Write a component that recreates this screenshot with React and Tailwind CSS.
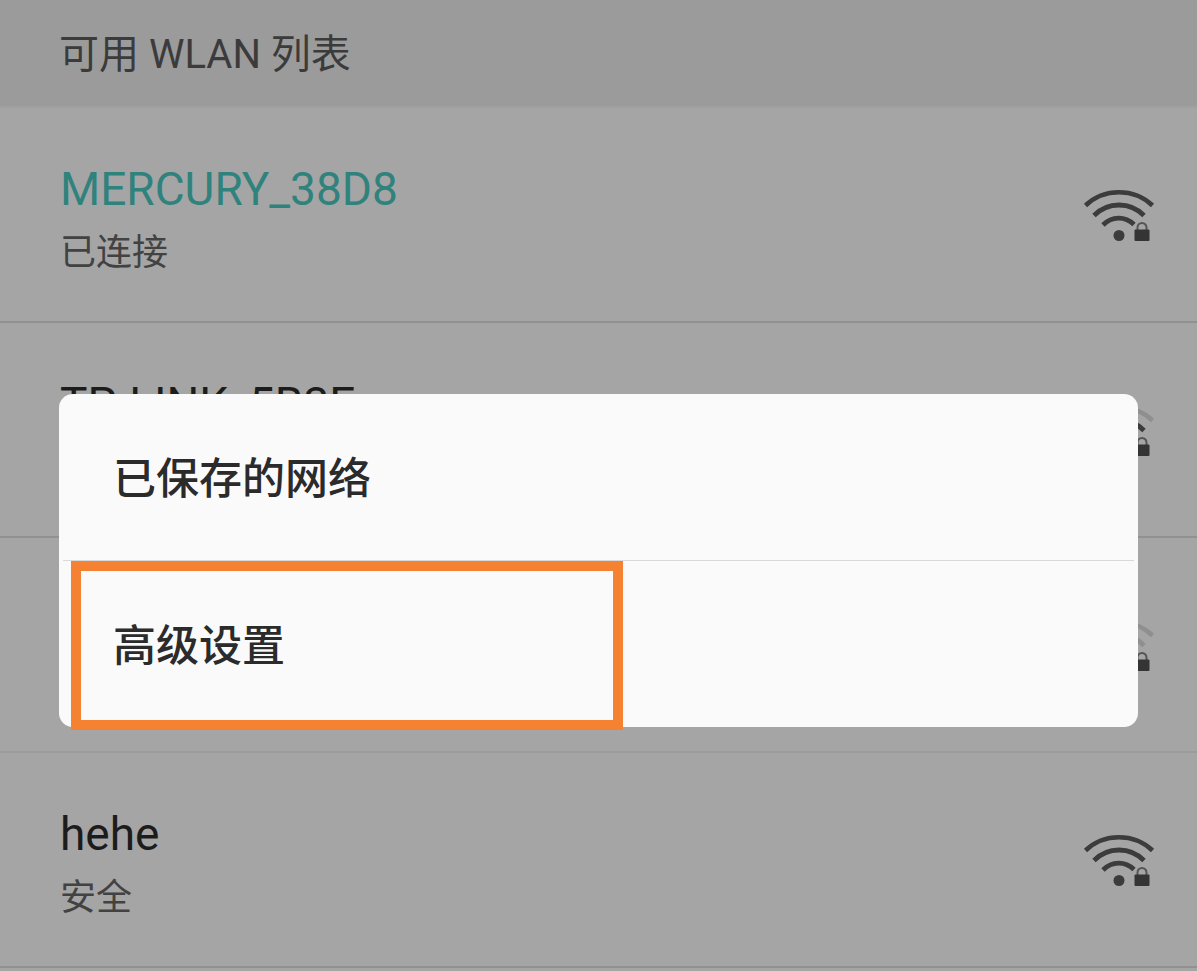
import React from 'react';

const networks = [
  { name: 'MERCURY_38D8', status: '已连接', level: 3, connected: true },
  { name: 'TP-LINK_5B3E', status: '', level: 2 },
  { name: '', status: '', level: 1, faint: true },
  { name: 'hehe', status: '安全', level: 3 },
];

function WifiLockIcon({ level }) {
  const tone = (n) => (level >= n ? '#3c3c3c' : '#8f8f8f');
  return (
    <svg className="h-14 w-[72px] shrink-0" viewBox="0 0 72 56" fill="none" aria-hidden="true">
      <path d="M2.5 18.5C21 .8 51 .8 69.5 18.5" stroke={tone(3)} strokeWidth="4.6" />
      <path d="M11 28.500C25 14.500 47 14.500 61 28.500" stroke={tone(2)} strokeWidth="4.800" />
      <path d="M20 38C29 29 42 29 51 37.500" stroke={tone(1)} strokeWidth="4.800" />
      <circle cx="36" cy="48.500" r="5.500" fill="#3c3c3c" />
      <path d="M54.500 44v-3.500a4.500 4.500 0 0 1 9 0V44" stroke="#555555" strokeWidth="2" />
      <rect x="51.500" y="42.500" width="15" height="11.500" rx="1" fill="#343434" />
    </svg>
  );
}

function NetworkRow({ network }) {
  const nameColor = network.connected ? 'text-[#30827d]' : 'text-[#1c1c1c]';
  const lineColor = network.faint ? 'border-[#9c9c9c]' : 'border-[#919191]';
  return (
    <li className={`flex h-[215px] items-center justify-between border-b-2 pr-[42px] pl-[60px] ${lineColor}`}>
      <div className="pt-3">
        <p className={`h-16 text-[46px] leading-[64px] ${nameColor}`}>{network.name}</p>
        <p className="h-16 text-[36px] leading-[64px] text-[#424242]">{network.status}</p>
      </div>
      <WifiLockIcon level={network.level} />
    </li>
  );
}

export default function App() {
  return (
    <div className="relative min-h-screen bg-[#a5a5a5] font-['Roboto','Noto_Sans_CJK_SC',sans-serif]" lang="zh-CN">
      <main>
        <h1 className="flex h-[108px] items-center border-b-2 border-[#a0a0a0] bg-[#9b9b9b] pt-1 pl-[59px] text-[40px] font-normal text-[#3b3b3b]">
          可用 WLAN 列表
        </h1>
        <ul>
          {networks.map((network, i) => (
            <NetworkRow key={i} network={network} />
          ))}
        </ul>
      </main>

      <div role="menu" className="absolute inset-x-[59px] top-[394px] rounded-[14px] bg-[#fafafa] text-[43px] font-medium text-[#2b2b2b]">
        <button type="button" role="menuitem" className="block h-[166px] w-full pt-1 pl-[54px] text-left">
          已保存的网络
        </button>
        <div className="mx-1 h-px bg-[#d9d9d9]" />
        <div className="relative">
          <button type="button" role="menuitem" className="block h-[166px] w-full pt-1 pl-[54px] text-left">
            高级设置
          </button>
          <div className="pointer-events-none absolute -bottom-[3px] left-3 top-0 w-[552px] border-10 border-[#f58232]" />
        </div>
      </div>
    </div>
  );
}
